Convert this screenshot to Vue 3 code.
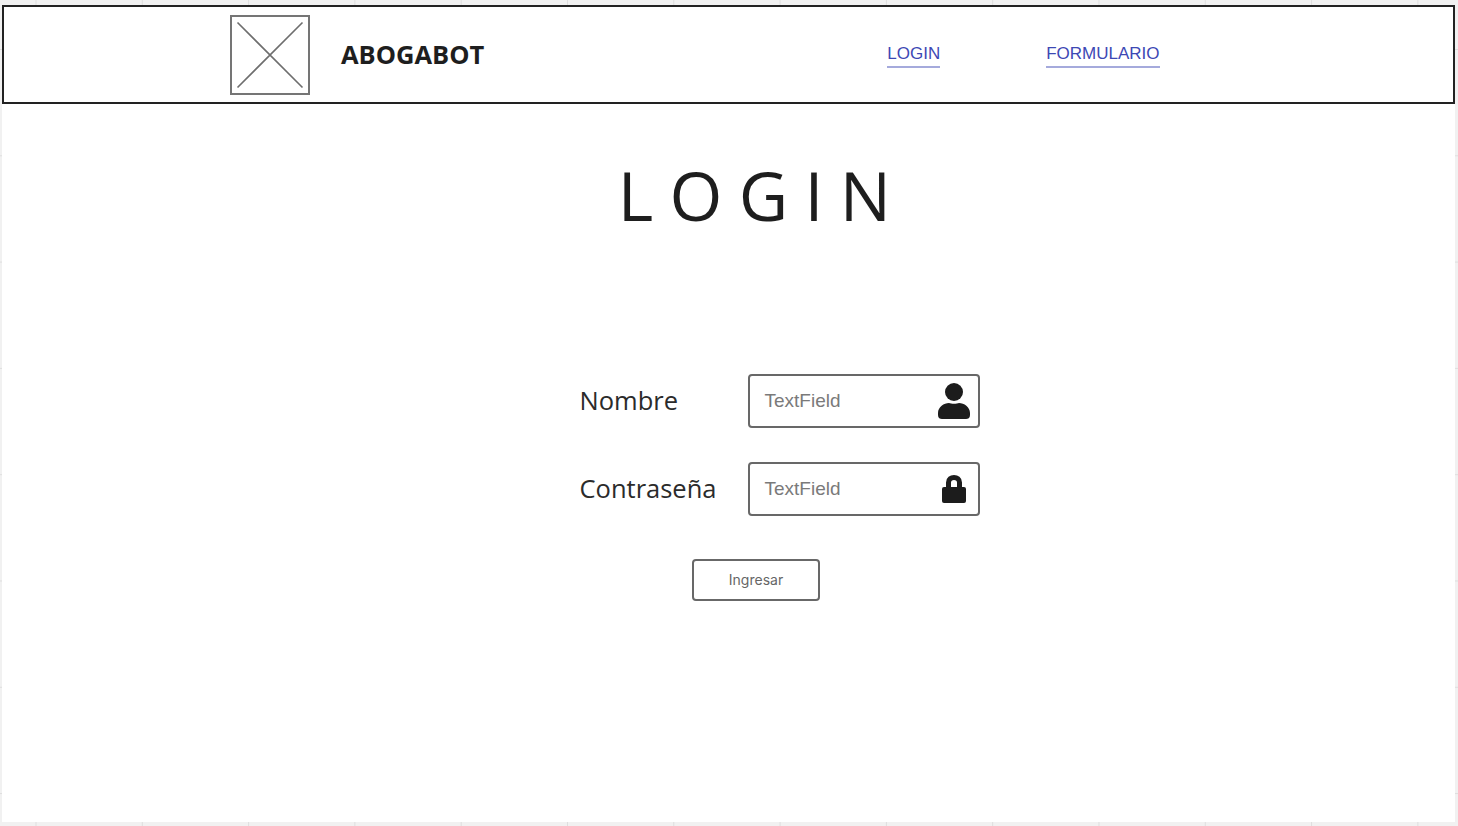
<template>
  <div class="screen">
    <div class="canvas">
      <header class="topbar">
        <svg class="logo" width="80" height="80" viewBox="0 0 80 80">
          <rect x="1" y="1" width="78" height="78" fill="#fff" stroke="#757575" stroke-width="2" />
          <path d="M7.5 7.5 L72.5 72.5 M72.500 7.5 L7.5 72.5" stroke="#6e6e6e" stroke-width="1.6" fill="none" />
        </svg>
        <span class="brand">ABOGABOT</span>
        <nav class="nav">
          <a v-for="link in links" :key="link" class="nav-link">{{ link }}</a>
        </nav>
      </header>

      <main class="content">
        <h1 class="title">LOGIN</h1>

        <form class="form" @submit.prevent>
          <div class="row">
            <label class="label">Nombre</label>
            <div class="field">
              <span class="placeholder">TextField</span>
              <svg class="icon" width="32" height="36" viewBox="0 0 32 36">
                <circle cx="16" cy="9" r="9" fill="#1c1c1c" />
                <path d="M0 30 C0 24 6 20 11 20 C13 21 19 21 21 20 C26 20 32 24 32 30 L32 32 C32 35 30 36 28 36 L4 36 C2 36 0 35 0 32 Z" fill="#1c1c1c" />
              </svg>
            </div>
          </div>
          <div class="row">
            <label class="label">Contraseña</label>
            <div class="field">
              <span class="placeholder">TextField</span>
              <svg class="icon" width="32" height="36" viewBox="0 0 32 36">
                <path d="M10.5 18 V11.500 C10.5 8 13 6.500 16 6.500 C19 6.500 21.500 8 21.500 11.500 V18" fill="none" stroke="#1c1c1c" stroke-width="5" />
                <rect x="4" y="16" width="24" height="16" rx="2" fill="#1c1c1c" />
              </svg>
            </div>
          </div>
          <button class="submit" type="submit">Ingresar</button>
        </form>
      </main>
    </div>
  </div>
</template>

<script setup>
const links = ["LOGIN", "FORMULARIO"];
</script>

<style>
html,
body {
  margin: 0;
  overflow: hidden;
}
</style>

<style scoped>
.screen {
  width: 1458px;
  height: 826px;
  box-sizing: border-box;
  padding: 5px 3px 4px 2px;
  background-color: #f1f1f1;
  background-image:
    linear-gradient(to right, #dedede 1px, transparent 1px),
    linear-gradient(to bottom, #dedede 1px, transparent 1px);
  background-size: 106.3px 106.3px;
  background-position: 35.5px 49px;
}
.canvas {
  height: 100%;
  display: flex;
  flex-direction: column;
  background: #fff;
}
.topbar {
  height: 99px;
  box-sizing: border-box;
  border: 2px solid #222;
  display: flex;
  align-items: center;
  padding-left: 226px;
}
.logo {
  flex: none;
}
.brand {
  margin-left: 31px;
  font-family: "Open Sans", sans-serif;
  font-weight: 700;
  font-size: 25.5px;
  color: #1e1e1e;
  position: relative;
  top: -1px;
}
.nav {
  margin-left: 403px;
  display: flex;
  gap: 106px;
}
.nav-link {
  font-family: "Liberation Sans", sans-serif;
  font-size: 17px;
  line-height: 24px;
  color: #3d48b4;
  border-bottom: 2px solid #a5aadc;
}
.content {
  flex: 1;
  display: flex;
  flex-direction: column;
  align-items: center;
  padding-left: 54px;
}
.title {
  margin: 51px 0 0 14px;
  font-family: "Open Sans", sans-serif;
  font-weight: 400;
  font-size: 68px;
  line-height: 80px;
  letter-spacing: 16.25px;
  color: #1e1e1e;
}
.form {
  margin-top: 139px;
  display: flex;
  flex-direction: column;
  align-items: center;
  gap: 34px;
}
.row {
  width: 400px;
  margin-left: 48px;
  display: flex;
  align-items: center;
  justify-content: space-between;
}
.label {
  font-family: "Open Sans", sans-serif;
  font-size: 25.5px;
  color: #2b2b2b;
  margin-top: -2px;
}
.field {
  width: 232px;
  height: 54px;
  box-sizing: border-box;
  border: 2px solid #686868;
  border-radius: 4px;
  display: flex;
  align-items: center;
  justify-content: space-between;
  padding: 0 8px 0 15px;
}
.placeholder {
  font-family: "Liberation Sans", sans-serif;
  font-size: 19px;
  color: #7a7a7a;
}
.submit {
  width: 128px;
  height: 42px;
  margin-top: 9px;
  background: #fff;
  border: 2px solid #686868;
  border-radius: 4px;
  font-family: Inter, sans-serif;
  font-size: 14px;
  color: #666;
  padding: 0 0 2px 1px;
}
</style>
